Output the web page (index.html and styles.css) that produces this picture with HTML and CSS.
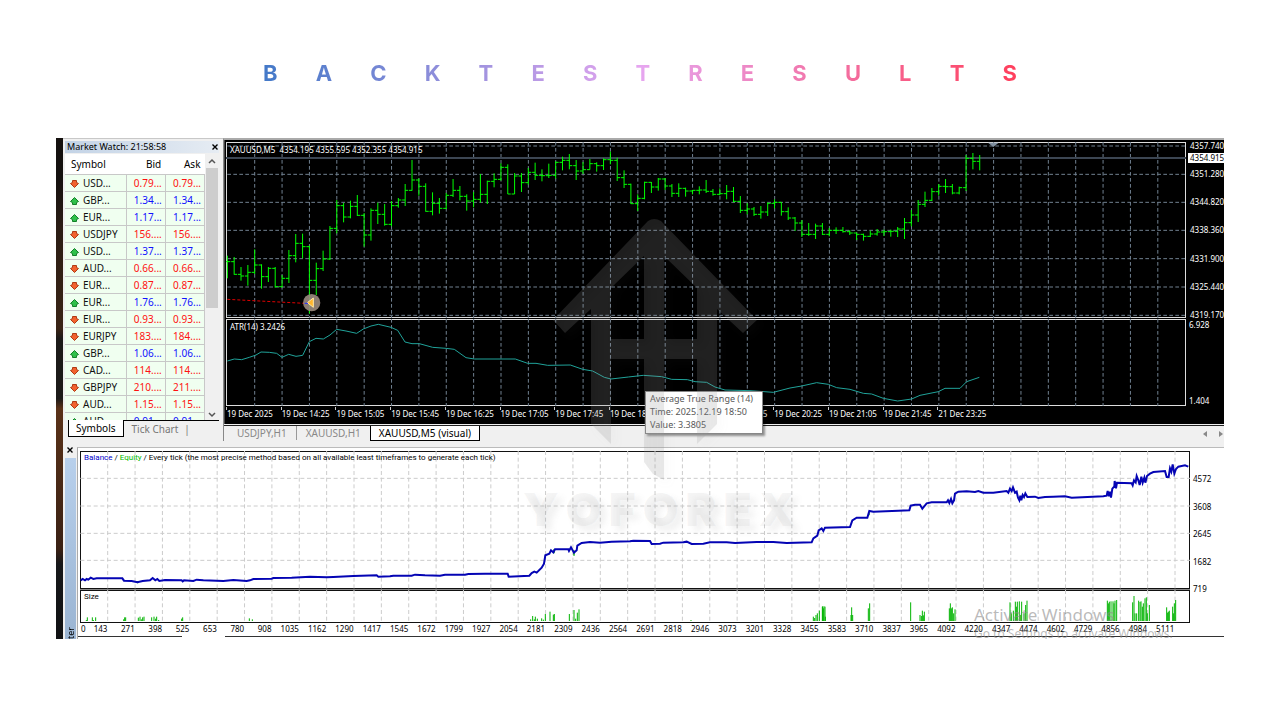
FILE: index.html
```
<!DOCTYPE html>
<html lang="en">
<head>
  <meta charset="UTF-8">
  <meta name="viewport" content="width=device-width, initial-scale=1.0">
  <title>Backtest Results</title>
  <link rel="stylesheet" href="styles.css">
</head>
<body>
  <!-- Title -->
  <h1 class="title" id="title" aria-label="Backtest Results"></h1>

  <main class="terminal">
    <div class="desktop-edge"></div>

    <!-- Market Watch -->
    <section class="market">
      <header class="market-header">
        <span>Market Watch: 21:58:58</span>
        <button class="close" aria-label="Close Market Watch">
          <svg width="6" height="6" viewBox="0 0 6 6"><path d="M0.5 0.5L5.5 5.5M5.5 0.5L0.5 5.5" stroke="#000" stroke-width="1.4"/></svg>
        </button>
      </header>
      <div class="market-body">
        <table>
          <thead>
            <tr><th>Symbol</th><th>Bid</th><th>Ask</th></tr>
          </thead>
          <tbody id="symbols"></tbody>
        </table>
        <div class="scrollbar">
          <svg width="8" height="6" viewBox="0 0 8 6"><path d="M1 5L4 2L7 5" fill="none" stroke="#555" stroke-width="1.5"/></svg>
          <div class="thumb"></div>
          <svg width="8" height="6" viewBox="0 0 8 6"><path d="M1 1L4 4L7 1" fill="none" stroke="#555" stroke-width="1.5"/></svg>
        </div>
      </div>
      <div class="market-tabs">
        <button class="active">Symbols</button>
        <button>Tick Chart</button>
      </div>
    </section>

    <!-- Price chart and indicator -->
    <section class="charts">
      <div class="chart-area">
        <div class="plot">
          <svg class="price-plot" viewBox="0 21 2880 528" preserveAspectRatio="none">
            <path class="grid" id="priceGrid"/>
            <path class="price-line" d="M0 69H2880"/>
            <path d="M2286 23H2318L2302 36Z" fill="#8090a0"/>
            <path d="M4 493L236 505" stroke="#e00000" stroke-width="3" stroke-dasharray="9 6"/>
            <path class="bars" id="bars"/>
            <circle cx="257" cy="503" r="26" fill="#9a8b80" fill-opacity="0.9"/>
            <path d="M244 503L262 489V517Z" fill="#ffb52e" stroke="#ffe9a8" stroke-width="3"/>
            <path d="M236 505H246" stroke="#2030ff" stroke-width="3"/>
          </svg>
          <p class="chart-label">XAUUSD,M5&nbsp; 4354.195 4355.595 4352.355 4354.915</p>
        </div>
        <div class="scale">
          <span>4357.740</span><span>4351.280</span><span>4344.820</span><span>4338.360</span><span>4331.900</span><span>4325.440</span><span>4319.170</span>
          <strong class="current">4354.915</strong>
        </div>
        <div class="plot">
          <svg class="atr-plot" viewBox="0 12 2880 261" preserveAspectRatio="none">
            <path class="grid" id="atrGrid"/>
            <polyline class="atr" points="4,138 25,132 47,134 70,127 90,120 105,111 130,112 152,115 168,127 188,118 210,124 230,121 250,80 270,70 292,72 312,60 332,43 360,48 392,55 412,42 435,33 457,28 495,37 515,46 537,81 558,86 580,86 620,97 660,100 685,103 720,128 745,132 868,132 905,145 930,145 965,151 1033,150 1070,163 1100,168 1135,187 1155,192 1207,186 1252,181 1307,185 1337,193 1384,194 1407,200 1442,202 1467,216 1497,225 1572,227 1642,232 1692,219 1727,213 1772,203 1807,208 1832,218 1872,223 1912,235 1937,237 1972,250 2015,258 2057,252 2082,241 2137,230 2157,220 2202,220 2222,200 2260,187"/>
          </svg>
          <p class="chart-label">ATR(14) 3.2426</p>
        </div>
        <div class="scale atr-scale"><span>6.928</span><span>1.404</span></div>
        <ol class="times">
          <li>19 Dec 2025</li><li>19 Dec 14:25</li><li>19 Dec 15:05</li><li>19 Dec 15:45</li><li>19 Dec 16:25</li><li>19 Dec 17:05</li><li>19 Dec 17:45</li><li>19 Dec 18:25</li><li>19 Dec 19:05</li><li>19 Dec 19:45</li><li>19 Dec 20:25</li><li>19 Dec 21:05</li><li>19 Dec 21:45</li><li>21 Dec 23:25</li>
        </ol>
      </div>
      <nav class="chart-tabs">
        <button>USDJPY,H1</button>
        <button>XAUUSD,H1</button>
        <button class="active">XAUUSD,M5 (visual)</button>
        <span class="tab-arrows">
          <svg width="4" height="6" viewBox="0 0 4 6"><path d="M4 0V6L0 3Z" fill="#888"/></svg>
          <svg width="4" height="6" viewBox="0 0 4 6"><path d="M0 0V6L4 3Z" fill="#888"/></svg>
        </span>
      </nav>
    </section>

    <!-- Strategy tester -->
    <section class="tester">
      <div class="tester-side">
        <button class="close" aria-label="Close Tester">
          <svg width="6" height="6" viewBox="0 0 6 6"><path d="M0.5 0.5L5.5 5.5M5.5 0.5L0.5 5.5" stroke="#000" stroke-width="1.4"/></svg>
        </button>
        <div class="tester-name"><span>Tester</span></div>
      </div>
      <div class="tester-main">
        <div class="report">
          <div class="plot">
            <svg class="balance-plot" viewBox="90 30 3330 414" preserveAspectRatio="none">
              <path class="light-grid" id="balanceGrid"/>
              <path d="M263 420v7M1512 325v12M1572 328v16M3430 160v18M2457 215v8" stroke="#00b000" stroke-width="4"/>
              <polyline class="balance" points="92,418 98,414 105,418 110,414 115,416 122,410 130,414 140,412 217,412 222,419 245,420 262,424 278,420 300,418 308,411 316,418 322,414 328,420 345,417 395,418 398,421 402,418 430,420 440,416 460,418 520,420 550,417 590,420 600,418 610,414 665,413 670,411 725,410 780,407 830,409 850,408 910,405 980,403 985,407 1020,406 1030,404 1085,404 1095,401 1125,403 1170,404 1185,401 1245,401 1255,399 1305,398 1373,398 1376,407 1438,404 1445,396 1453,392 1460,395 1475,380 1482,368 1486,343 1498,338 1503,328 1510,334 1515,325 1555,325 1557,330 1563,319 1572,335 1580,328 1582,314 1595,306 1620,303 1650,305 1685,302 1740,301 1750,299 1800,300 1805,309 1830,308 1840,305 1900,304 1910,302 1925,309 1960,308 1980,304 2030,304 2055,306 2120,303 2170,303 2210,306 2285,304 2290,292 2302,284 2306,268 2315,262 2320,270 2325,260 2400,258 2407,238 2420,230 2452,230 2458,210 2470,212 2545,209 2578,208 2582,194 2595,191 2610,191 2617,203 2630,187 2645,184 2690,184 2694,178 2698,186 2703,174 2707,187 2712,178 2715,158 2725,152 2750,151 2775,153 2785,150 2800,155 2830,155 2870,150 2875,155 2880,143 2885,150 2889,139 2895,155 2900,152 2904,170 2908,178 2911,164 2914,178 2918,162 2922,168 2926,157 2932,168 2955,167 2965,171 2985,168 3010,167 3045,166 3065,170 3160,166 3170,164 3173,150 3177,166 3180,152 3183,170 3187,143 3193,136 3194,120 3198,142 3201,125 3245,127 3248,133 3252,118 3257,124 3260,105 3265,118 3269,132 3274,107 3278,125 3283,110 3286,125 3291,105 3300,98 3310,93 3345,90 3350,108 3356,108 3360,82 3364,92 3368,70 3373,98 3378,84 3385,77 3395,75 3405,73 3415,77"/>
            </svg>
            <p class="report-label"><span class="c-balance">Balance</span> / <span class="c-equity">Equity</span> / Every tick (the most precise method based on all available least timeframes to generate each tick)</p>
          </div>
          <div class="report-scale"><span>4572</span><span>3608</span><span>2645</span><span>1682</span><span>719</span></div>
          <div class="plot">
            <svg class="size-plot" viewBox="90 450 3330 99" preserveAspectRatio="none">
              <path class="light-grid" id="sizeGrid"/>
              <path class="sizes" id="sizes"/>
            </svg>
            <p class="report-label">Size</p>
          </div>
          <ol class="counts" id="counts"></ol>
        </div>
        <div class="panel-edge"><i></i><i></i></div>
      </div>
    </section>

    <!-- Tooltip -->
    <div class="tooltip" role="tooltip">Average True Range (14)<br>Time: 2025.12.19 18:50<br>Value: 3.3805</div>

    <!-- Watermark -->
    <div class="watermark" aria-hidden="true">
      <svg width="204" height="262" viewBox="553 219 204 262">
        <path fill="#969696" fill-opacity="0.2" d="M648 221Q654 217 661 221L757 320L743 333L717 309V424L697 444V359H664V480L653 474L644 462V359H611V444L591 424V309L565 333L553 320ZM644 256L611 288V339H644ZM664 256V339H697V288Z"/>
      </svg>
      <div class="brand"><span>Y</span><span>O</span><span>F</span><span>O</span><span>R</span><span>E</span><span>X</span></div>
    </div>
    <div class="activate"><p>Activate Windows</p><small>Go to Settings to activate Windows.</small></div>
  </main>

  <script src="script.js"></script>
</body>
</html>
```
FILE: styles.css
```
* {
  box-sizing: border-box;
}
body {
  margin: 0;
  padding: 57px 56px 0;
  background-color: #fff;
  font-family: "Noto Sans", "Open Sans", sans-serif;
  font-size: 8px;
  color: #000;
}
p, ol {
  margin: 0;
  padding: 0;
  list-style: none;
}
svg {
  display: block;
}
button {
  border: none;
  padding: 0;
  background: none;
  font: inherit;
  color: inherit;
  cursor: pointer;
}

/* Title */
.title {
  display: flex;
  justify-content: space-between;
  max-width: 754px;
  margin: 0 auto 49px;
  font-family: Inter, sans-serif;
  font-size: 22px;
  line-height: 32px;
  font-weight: 700;
  color: transparent;
  background: linear-gradient(90deg, #4379c8, #e6a6f0 50%, #ff3f5c);
  -webkit-background-clip: text;
  background-clip: text;
}

/* Terminal window */
.terminal {
  position: relative;
  display: grid;
  grid-template-columns: 7px 160px 1fr;
  grid-template-rows: 303px 198px;
  overflow: hidden;
}
.desktop-edge {
  grid-row: 1 / 3;
  background: linear-gradient(#15110f 8%, #2b1d15 18%, #3a2416 38%, #1c1a19 40%, #1c1a19 52%, #5a3219 54%, #3a2114 82%, #17181a 85%, #101113);
}

/* Market Watch */
.market {
  display: flex;
  flex-direction: column;
  padding: 2px 4px 0 2px;
  background-color: #f0f0f0;
  border-top: 1px solid #c8c8c8;
}
.market-header {
  display: flex;
  justify-content: space-between;
  align-items: center;
  height: 12px;
  padding: 0 1px 0 2px;
  font-size: 9px;
  line-height: 12px;
  background: linear-gradient(90deg, #c3d3e6, #e6ecf3);
}
.market-body {
  display: flex;
  height: 266px;
  margin-top: 1px;
  overflow: hidden;
  background-color: #fff;
}
table {
  flex: 1;
  align-self: flex-start;
  table-layout: fixed;
  width: 100%;
  border-collapse: collapse;
  font-size: 10px;
  line-height: 16px;
}
th {
  height: 20px;
  padding: 0 4px;
  font-weight: 400;
  text-align: right;
}
th:first-child {
  width: 61px;
  padding-left: 6px;
  text-align: left;
}
td {
  height: 17px;
  padding: 0 3px 0 2px;
  text-align: right;
  color: #f11;
  background-color: #f0fff0;
  border: 1px solid #c8c8c8;
  border-width: 1px 1px 1px 0;
}
td:first-child {
  padding-left: 5px;
  text-align: left;
  color: #111;
}
td svg {
  display: inline-block;
  vertical-align: -1px;
  margin-right: 4px;
}
.up td + td {
  color: #11f;
}
.scrollbar {
  display: flex;
  flex-direction: column;
  align-items: center;
  width: 14px;
  padding: 4px 0 2px;
  background-color: #f0f0f0;
}
.scrollbar svg {
  flex: none;
}
.thumb {
  width: 12px;
  height: 140px;
  margin: 4px 0 auto;
  background-color: #cdcdcd;
}
.market-tabs {
  display: flex;
  height: 17px;
  padding-left: 3px;
  font-size: 10px;
  line-height: 15px;
  color: #777;
}
.market-tabs button {
  padding: 0 8px;
  border-top: 1px solid #000;
}
.market-tabs button + button {
  flex: 1;
  text-align: left;
}
.market-tabs button + button::after {
  content: "|";
  margin-left: 6px;
}
.market-tabs .active {
  padding: 0 7px;
  color: #000;
  background-color: #fff;
  border: 1px solid #000;
  border-width: 0 1px 1px;
}

/* Charts */
.charts {
  display: flex;
  flex-direction: column;
  border-top: 2px solid #aaa;
  border-left: 1px solid #888;
  background-color: #f0f0f0;
}
.chart-area {
  display: grid;
  grid-template-columns: 1fr 38px;
  grid-template-rows: 176px 87px 17px;
  row-gap: 1px;
  padding: 2px 0 0 1px;
  color: #fff;
  background-color: #000;
  border-left: 1px solid #444;
}
.plot {
  position: relative;
}
.plot svg {
  width: 100%;
}
.price-plot {
  height: 176px;
  box-shadow: inset 0 0 0 1px #ddd;
}
.atr-plot {
  height: 87px;
  box-shadow: inset 0 0 0 1px #ddd;
}
.grid {
  stroke: #708090;
  stroke-width: 3;
  stroke-dasharray: 11 7;
}
.price-line {
  stroke: #3c4653;
  stroke-width: 6;
}
.bars {
  fill: none;
  stroke: #0f0;
  stroke-width: 3;
}
.atr {
  fill: none;
  stroke: #20a39a;
  stroke-width: 3;
}
.chart-label {
  position: absolute;
  top: 2px;
  left: 4px;
  line-height: 11px;
}
.scale {
  position: relative;
  display: flex;
  flex-direction: column;
  justify-content: space-between;
  margin: -1px 0 -2px;
  padding-left: 4px;
  line-height: 10px;
}
.atr-scale {
  margin: 0;
  padding: 1px 0 0 3px;
}
.current {
  position: absolute;
  top: 12px;
  left: 2px;
  right: 0;
  padding-left: 2px;
  font-weight: 400;
  color: #000;
  background-color: #fff;
}
.times {
  display: flex;
  line-height: 14px;
}
.times li {
  flex: 0 0 5.7%;
  height: 3px;
  border-left: 1px solid #ccc;
  white-space: nowrap;
}
.chart-tabs {
  display: flex;
  align-items: flex-start;
  margin-top: 1px;
  padding-left: 4px;
  font-size: 10px;
  line-height: 14px;
  color: #888;
  border-top: 1px solid #222;
}
.chart-tabs button {
  padding: 0 9px;
}
.chart-tabs button:first-child {
  border-right: 1px solid #999;
}
.chart-tabs .active {
  padding: 0 8px;
  color: #000;
  background-color: #fff;
  border: 1px solid #000;
  border-width: 0 1px 2px;
}
.tab-arrows {
  display: flex;
  gap: 12px;
  margin: 5px 1px 0 auto;
}

/* Tester */
.tester {
  grid-column: 2 / 4;
  display: flex;
  background-color: #f0f0f0;
}
.tester-side {
  display: flex;
  flex-direction: column;
  align-items: center;
  width: 14px;
}
.tester-side .close {
  height: 17px;
}
.tester-name {
  flex: 1;
  display: flex;
  justify-content: center;
  width: 11px;
  overflow: hidden;
  font-size: 9px;
  line-height: 11px;
  writing-mode: vertical-rl;
  background: linear-gradient(#b8d0ec, #9ab4d2);
}
.tester-name span {
  align-self: center;
  margin: auto 0 -14px;
  transform: rotate(180deg);
}
.tester-main {
  flex: 1;
  margin-top: 6px;
  padding: 3px 0 0 2px;
  background-color: #fff;
  border-top: 1px solid #bbb;
  border-left: 1px solid #aaa;
}
.report {
  display: grid;
  grid-template-columns: 1fr 34px;
  grid-template-rows: 138px 33px 12px;
  row-gap: 1px;
}
.balance-plot {
  height: 138px;
  box-shadow: inset 0 0 0 1px #111, 0 1px 0 #888;
}
.size-plot {
  height: 33px;
  box-shadow: inset 0 0 0 1px #111;
}
.light-grid {
  stroke: #ccc;
  stroke-width: 3;
  stroke-dasharray: 12 8;
}
.balance {
  fill: none;
  stroke: #0404b4;
  stroke-width: 6;
}
.sizes {
  stroke: #00b400;
  stroke-width: 3;
}
.report-label {
  position: absolute;
  top: 1px;
  left: 4px;
  font-family: Roboto, sans-serif;
  line-height: 11px;
  white-space: nowrap;
}
.c-balance {
  color: #00c;
}
.c-equity {
  color: #0b0;
}
.report-scale {
  display: flex;
  flex-direction: column;
  justify-content: space-between;
  margin-bottom: -5px;
  padding: 23px 0 0 3px;
  line-height: 10px;
}
.counts {
  grid-column: 1;
  display: flex;
  line-height: 10px;
}
.counts li {
  display: flex;
  justify-content: flex-end;
  flex: 0 0 2.466%;
}
.counts li:first-child {
  justify-content: space-between;
  padding-left: 1px;
}
.panel-edge {
  display: flex;
  justify-content: space-between;
  gap: 43px;
  margin-left: -2px;
}
.panel-edge i {
  flex: 0 0 104px;
  height: 1px;
  background-color: #333;
}
.panel-edge i + i {
  flex: 1;
}

/* Overlays */
.tooltip {
  position: absolute;
  top: 253px;
  left: 589px;
  padding: 0 9px 2px 4px;
  font-size: 9px;
  line-height: 13px;
  color: #575757;
  background-color: #fff;
  border: 1px solid #888;
  box-shadow: 2px 2px 2px rgba(0, 0, 0, 0.4);
}
.watermark {
  position: absolute;
  top: 81px;
  left: 467px;
  width: 272px;
  pointer-events: none;
}
.watermark svg {
  margin-left: 30px;
  filter: drop-shadow(5px 5px 4px rgba(120, 120, 120, 0.15));
}
.brand {
  display: flex;
  justify-content: space-between;
  font-family: Inter, sans-serif;
  font-size: 46px;
  line-height: 56px;
  font-weight: 900;
  color: rgba(150, 150, 150, 0.09);
  text-shadow: 6px 5px 6px rgba(120, 120, 120, 0.1);
}
.activate {
  position: absolute;
  top: 465px;
  left: 918px;
  color: rgba(140, 140, 140, 0.6);
}
.activate p {
  font-size: 17px;
  line-height: 24px;
}
.activate small {
  display: block;
  font-size: 12px;
  line-height: 14px;
}
```
FILE: script.js
```
// Title letters
document.getElementById("title").innerHTML = [..."BACKTESTRESULTS"].map(c => `<span>${c}</span>`).join("");

// Market watch rows: symbol, bid, ask, direction
const symbols = [
  ["USD...", "0.79...", "0.79...", "down"],
  ["GBP...", "1.34...", "1.34...", "up"],
  ["EUR...", "1.17...", "1.17...", "up"],
  ["USDJPY", "156....", "156....", "down"],
  ["USD...", "1.37...", "1.37...", "up"],
  ["AUD...", "0.66...", "0.66...", "down"],
  ["EUR...", "0.87...", "0.87...", "down"],
  ["EUR...", "1.76...", "1.76...", "up"],
  ["EUR...", "0.93...", "0.93...", "down"],
  ["EURJPY", "183....", "184....", "down"],
  ["GBP...", "1.06...", "1.06...", "up"],
  ["CAD...", "114....", "114....", "down"],
  ["GBPJPY", "210....", "211....", "down"],
  ["AUD...", "1.15...", "1.15...", "down"],
  ["AUD...", "0.91...", "0.91...", "up"]
];
const arrows = {
  up: '<path d="M4.5 0.5L8.5 4.5L6.5 5.5V7.5H2.5V5.5L0.5 4.5Z" fill="#2fc04a" stroke="#128028"/>',
  down: '<path d="M4.5 7.5L8.5 3.5L6.5 2.5V0.5H2.5V2.5L0.5 3.5Z" fill="#f2622e" stroke="#b03a14"/>'
};
document.getElementById("symbols").innerHTML = symbols.map(([name, bid, ask, dir]) => `
  <tr class="${dir}">
    <td><svg width="9" height="8" viewBox="0 0 9 8">${arrows[dir]}</svg>${name}</td>
    <td>${bid}</td>
    <td>${ask}</td>
  </tr>`).join("");

// Grids
function grid(id, x0, x1, stepX, y0, y1, rows) {
  let d = "";
  for (let x = x0 + stepX; x < x1 - 10; x += stepX) d += `M${x} ${y0}V${y1}`;
  rows.forEach(y => d += `M${x0} ${y}H${x1}`);
  document.getElementById(id).setAttribute("d", d);
}
grid("priceGrid", 4, 2880, 82.1, 21, 549, [33, 118, 202, 286, 371, 456, 541]);
grid("atrGrid", 4, 2880, 82.1, 12, 273, []);
grid("balanceGrid", 91, 3420, 82.1, 30, 444, [112, 195, 277, 358]);
grid("sizeGrid", 91, 3420, 82.1, 450, 549, []);

// Price bars: high, low, close
const bars = [
  [362,430,380],[366,419,418],[396,437,423],[390,452,412],[343,417,390],[388,461,425],[396,441,400],[396,458,455],
  [420,458,430],[345,444,362],[297,382,325],[296,370,335],[332,536,436],[383,480,401],[347,408,372],[273,375,280],
  [195,295,212],[204,262,246],[197,250,214],[180,243,241],[234,335,300],[220,317,226],[203,267,238],[207,272,268],
  [198,274,212],[189,218,195],[147,213,166],[75,167,135],[130,182,154],[145,230,229],[172,241,205],[189,236,220],
  [174,222,181],[132,186,166],[153,196,184],[178,227,198],[171,217,193],[117,203,178],[137,207,139],[115,157,133],
  [85,137,97],[88,177,177],[114,177,123],[114,171,143],[99,149,112],[83,135,121],[103,139,122],[86,129,121],
  [79,131,82],[65,106,76],[57,103,92],[75,135,108],[81,117,104],[72,104,86],[82,110,92],[70,105,74],
  [50,88,76],[68,138,128],[106,159,148],[146,207,206],[178,228,190],[140,193,142],[141,174,156],[129,167,132],
  [129,165,153],[147,186,175],[145,186,160],[158,185,168],[165,178,166],[154,178,165],[135,174,169],[162,182,178],
  [160,181,176],[150,193,169],[156,202,199],[183,234,226],[204,238,222],[216,243,238],[213,251,231],[202,243,205],
  [193,220,202],[202,242,230],[217,255,249],[246,288,264],[255,306,298],[264,303,298],[266,312,273],[264,300,298],
  [279,304,286],[277,297,286],[276,293,290],[285,300,294],[293,315,298],[296,317,304],[287,306,297],[282,302,291],
  [284,303,290],[284,305,289],[276,306,282],[249,312,263],[225,274,240],[195,261,208],[170,216,196],[159,198,170],
  [147,182,154],[132,174,155],[147,178,174],[155,178,158],[60,168,70],[54,103,79],[60,106,79]
];
document.getElementById("bars").setAttribute("d", bars.map(([high, low, close], i) => {
  const x = (4 + i * 20.52).toFixed(1);
  const open = i ? bars[i - 1][2] : close;
  const right = i < bars.length - 1 ? `M${x} ${close}h9` : "";
  return `M${x} ${high}V${low}M${x} ${open}h-9${right}`;
}).join(""));

// Lot sizes: x, top
const sizes = [
  [109,540],[112,532],[127,532],[130,540],[137,532],[221,538],[224,532],[227,532],[265,533],[270,530],[274,538],[278,532],[282,530],
  [305,532],[312,530],[317,536],[320,530],[326,540],[395,536],[398,532],[598,535],[607,538],
  [1442,538],[1448,528],[1453,538],[1456,530],[1462,536],[1475,535],[1480,539],[1486,522],[1500,515],[1510,524],[1513,522],
  [1558,522],[1572,510],[1577,536],[1582,518],[1587,508],[1923,540],[2290,530],[2294,534],[2298,525],[2302,520],[2308,512],
  [2317,500],[2320,505],[2325,500],[2318,499],[2322,499],[2326,530],[2403,525],[2405,502],[2408,525],[2455,505],[2459,490],
  [2582,487],[2610,525],[2614,528],[2617,512],[2620,526],[2623,515],[2698,505],[2701,490],[2704,505],[2707,502],[2711,520],[2715,508],
  [2880,487],[2884,520],[2890,512],[2896,485],[2899,500],[2902,485],[2908,484],[2912,525],[2915,485],[2922,520],[2927,495],[2931,482],
  [3172,482],[3175,490],[3178,485],[3183,484],[3189,484],[3192,490],[3195,482],[3200,480],[3248,487],[3252,468],[3255,520],[3260,520],
  [3266,482],[3270,486],[3273,484],[3277,500],[3280,490],[3285,475],[3289,472],[3292,520],[3298,495],[3350,502],[3353,518],[3355,515],
  [3358,512],[3368,500],[3371,520],[3373,490],[3377,480]
];
document.getElementById("sizes").setAttribute("d", sizes.map(([x, top]) => `M${x} 543V${top}`).join(""));

// Trade counts
const counts = [143,271,398,525,653,780,908,1035,1162,1290,1417,1545,1672,1799,1927,2054,2181,2309,2436,2564,2691,2818,2946,3073,3201,3328,3455,3583,3710,3837,3965,4092,4220,4347,4474,4602,4729,4856,4984,5111];
document.getElementById("counts").innerHTML = counts.map((n, i) => `<li>${i ? "" : "<span>0</span>"}<span>${n}</span></li>`).join("");
```
